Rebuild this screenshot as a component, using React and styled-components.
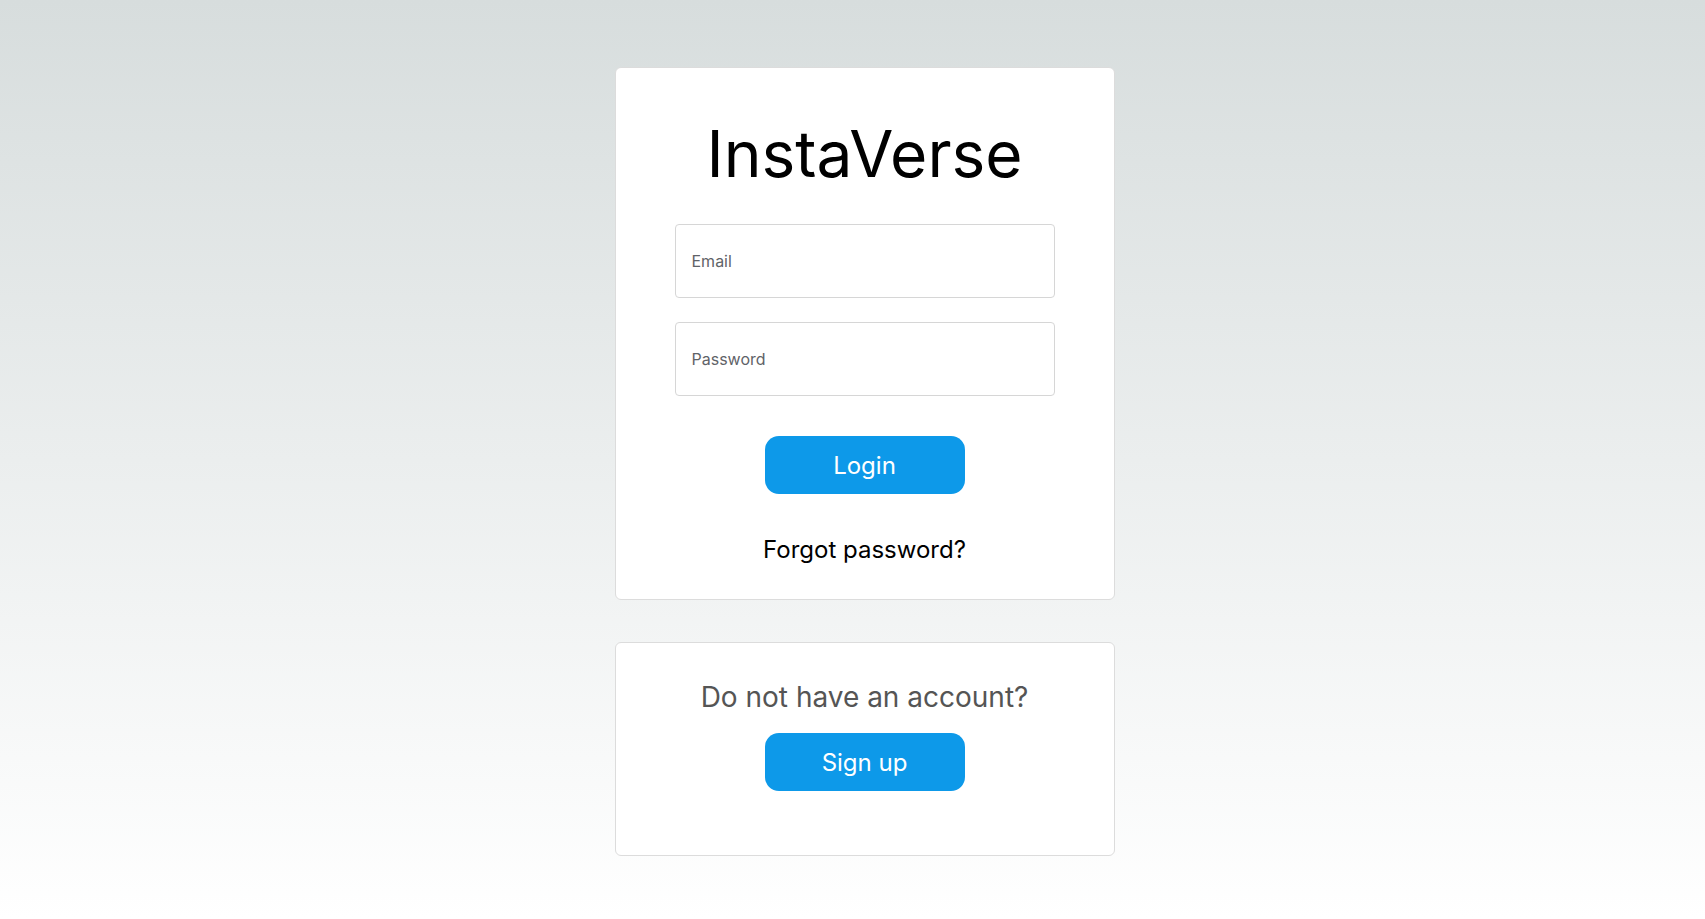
import React from 'react';
import styled, { createGlobalStyle } from 'styled-components';

const GlobalStyle = createGlobalStyle`
    html, body {
        margin: 0;
        padding: 0;
        height: 100%;
    }
    body {
        font-family: Inter, "Noto Sans", "Liberation Sans", sans-serif;
        background: linear-gradient(180deg, #d7dddd 0%, #ffffff 100%);
        background-attachment: fixed;
        min-height: 919px;
    }
`;

const Page = styled.div`
    display: flex;
    flex-direction: column;
    align-items: center;
    padding: 67px 0 0 24px;
    gap: 42px;
`;

const Card = styled.div`
    box-sizing: border-box;
    width: 500px;
    background: #ffffff;
    border: 1px solid #dcdcdc;
    border-radius: 6px;
    display: flex;
    flex-direction: column;
    align-items: center;
    padding: ${props => props.$pad};
`;

const Title = styled.h1`
    margin: 0 0 32px;
    font-size: 64px;
    font-weight: 400;
    color: #000;
    line-height: 77px;
`;

const Field = styled.input`
    box-sizing: border-box;
    width: 380px;
    height: 74px;
    padding: 0 16px;
    border: 1px solid #d6d6d6;
    border-radius: 4px;
    font-family: inherit;
    font-size: 16px;
    color: #333;
    margin-bottom: 24px;
    outline: none;
    &::placeholder {
        color: #5f6368;
    }
`;

const Button = styled.button`
    width: 200px;
    height: 58px;
    border: none;
    border-radius: 14px;
    background: #0d99e9;
    color: #ffffff;
    font-family: inherit;
    font-size: 24px;
    cursor: pointer;
    margin-top: ${props => props.$top || 0};
`;

const Link = styled.a`
    margin-top: 41px;
    font-size: 24px;
    line-height: 29px;
    color: #000;
    text-decoration: none;
    cursor: pointer;
`;

const Prompt = styled.p`
    margin: 0 0 19px;
    font-size: 28px;
    line-height: 34px;
    color: #555555;
`;

export default function App() {
    return (
        <>
            <GlobalStyle />
            <Page>
                <Card $pad="47px 0 35px">
                    <Title>InstaVerse</Title>
                    <Field type="email" placeholder="Email" />
                    <Field type="password" placeholder="Password" />
                    <Button $top="16px">Login</Button>
                    <Link>Forgot password?</Link>
                </Card>
                <Card $pad="37px 0 64px">
                    <Prompt>Do not have an account?</Prompt>
                    <Button>Sign up</Button>
                </Card>
            </Page>
        </>
    );
}
